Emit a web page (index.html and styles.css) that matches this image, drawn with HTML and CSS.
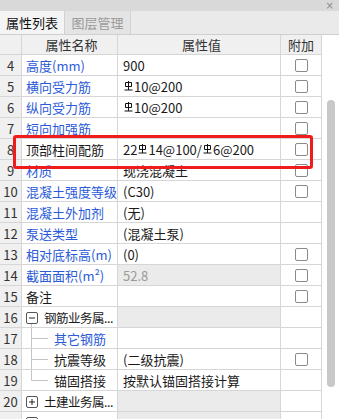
FILE: index.html
```html
<!DOCTYPE html>
<html lang="zh">
<head>
<meta charset="utf-8">
<link rel="stylesheet" href="styles.css">
</head>
<body>
<div class="panel">
  <div class="titlebar"><span class="close">×</span></div>
  <div class="tabs">
    <div class="tab active">属性列表</div>
    <div class="tab">图层管理</div>
  </div>
  <div class="body">
    <div class="grid">
      <div class="row head">
        <div class="c num"></div>
        <div class="c name">属性名称</div>
        <div class="c val">属性值</div>
        <div class="c add">附加</div>
      </div>
      <div class="row"><div class="c num">4</div><div class="c name blue">高度(mm)</div><div class="c val">900</div><div class="c add"><span class="cb"></span></div></div>
      <div class="row"><div class="c num">5</div><div class="c name blue">横向受力筋</div><div class="c val"><svg class="rb" viewBox="0 0 9 10"><path d="M4.5 0V9M1.5 1.5H7.5V5.5H1.5ZM0.5 9H8.5" /></svg>10@200</div><div class="c add"><span class="cb"></span></div></div>
      <div class="row"><div class="c num">6</div><div class="c name blue">纵向受力筋</div><div class="c val"><svg class="rb" viewBox="0 0 9 10"><path d="M4.5 0V9M1.5 1.5H7.5V5.5H1.5ZM0.5 9H8.5" /></svg>10@200</div><div class="c add"><span class="cb"></span></div></div>
      <div class="row"><div class="c num">7</div><div class="c name blue">短向加强筋</div><div class="c val"></div><div class="c add"><span class="cb"></span></div></div>
      <div class="row"><div class="c num">8</div><div class="c name">顶部柱间配筋</div><div class="c val">22<svg class="rb" viewBox="0 0 9 10"><path d="M4.5 0V9M1.5 1.5H7.5V5.5H1.5ZM0.5 9H8.5" /></svg>14@100/<svg class="rb" viewBox="0 0 9 10"><path d="M4.5 0V9M1.5 1.5H7.5V5.5H1.5ZM0.5 9H8.5" /></svg>6@200</div><div class="c add"><span class="cb"></span></div></div>
      <div class="row"><div class="c num">9</div><div class="c name blue">材质</div><div class="c val">现浇混凝土</div><div class="c add"><span class="cb"></span></div></div>
      <div class="row"><div class="c num">10</div><div class="c name blue">混凝土强度等级</div><div class="c val">(C30)</div><div class="c add"><span class="cb"></span></div></div>
      <div class="row"><div class="c num">11</div><div class="c name blue">混凝土外加剂</div><div class="c val">(无)</div><div class="c add"></div></div>
      <div class="row"><div class="c num">12</div><div class="c name blue">泵送类型</div><div class="c val">(混凝土泵)</div><div class="c add"></div></div>
      <div class="row"><div class="c num">13</div><div class="c name blue">相对底标高(m)</div><div class="c val">(0)</div><div class="c add"><span class="cb"></span></div></div>
      <div class="row"><div class="c num">14</div><div class="c name blue">截面面积(m²)</div><div class="c val ro">52.8</div><div class="c add"><span class="cb"></span></div></div>
      <div class="row"><div class="c num">15</div><div class="c name">备注</div><div class="c val"></div><div class="c add"><span class="cb"></span></div></div>
      <div class="row"><div class="c num">16</div><div class="c name tree"><svg class="tg" viewBox="0 0 12 21"><rect x="0.5" y="5.5" width="11" height="11" rx="1.5" class="box"/><path d="M3 11H9" class="sign"/><path d="M5.5 17V21" class="ln"/></svg><span class="grp">钢筋业务属...</span></div><div class="c val ro"></div><div class="c add"></div></div>
      <div class="row"><div class="c num">17</div><div class="c name tree"><svg class="tl" viewBox="0 0 28 21"><path d="M5.5 0V21M5.5 10.5H22" class="ln"/></svg><span class="blue">其它钢筋</span></div><div class="c val"></div><div class="c add"></div></div>
      <div class="row"><div class="c num">18</div><div class="c name tree"><svg class="tl" viewBox="0 0 28 21"><path d="M5.5 0V21M5.5 10.5H22" class="ln"/></svg><span>抗震等级</span></div><div class="c val">(二级抗震)</div><div class="c add"><span class="cb"></span></div></div>
      <div class="row"><div class="c num">19</div><div class="c name tree"><svg class="tl" viewBox="0 0 28 21"><path d="M5.5 0V10.5H22" class="ln"/></svg><span>锚固搭接</span></div><div class="c val">按默认锚固搭接计算</div><div class="c add"></div></div>
      <div class="row"><div class="c num">20</div><div class="c name tree"><svg class="tg" viewBox="0 0 12 21"><rect x="0.5" y="5.5" width="11" height="11" rx="1.5" class="box"/><path d="M3 11H9M6 8V14" class="sign"/></svg><span class="grp">土建业务属...</span></div><div class="c val ro"></div><div class="c add"></div></div>
      <div class="row"><div class="c num"></div><div class="c name tree"><svg class="tg" viewBox="0 0 12 21"><rect x="0.5" y="5.5" width="11" height="11" rx="1.5" class="box"/><path d="M3 11H9M6 8V14" class="sign"/></svg></div><div class="c val ro"></div><div class="c add"></div></div>
    </div>
    <div class="scroll"><div class="thumb"></div></div>
  </div>
  <div class="highlight"></div>
</div>
</body>
</html>
```

FILE: styles.css
```css
html, body {
  margin: 0;
  padding: 0;
  overflow: hidden;
  background: #ffffff;
}
.panel {
  position: relative;
  width: 339px;
  height: 419px;
  overflow: hidden;
  font-family: "Noto Sans CJK SC", "Noto Sans", sans-serif;
  font-size: 13px;
  color: #1a1a1a;
}
.titlebar {
  height: 11px;
  background: #d9d9d9;
  display: flex;
  justify-content: flex-end;
  align-items: center;
}
.close {
  font-family: "DejaVu Sans", sans-serif;
  font-size: 10px;
  line-height: 11px;
  color: #8c8c8c;
  margin-right: 5px;
}
.tabs {
  height: 24px;
  box-sizing: border-box;
  background: #eaeaea;
  border-bottom: 1px solid #cfcfcf;
  display: flex;
}
.tab {
  width: 66px;
  box-sizing: border-box;
  display: flex;
  align-items: center;
  justify-content: center;
  color: #9a9a9a;
  border-right: 1px solid #d2d2d2;
  background: #e4e4e4;
}
.tab.active {
  width: 65px;
  background: #f4f4f4;
  color: #111;
}
.body {
  display: flex;
}
.grid {
  width: 322px;
}
.row {
  display: grid;
  grid-template-columns: 22px 96px 163px 41px;
  height: 21px;
}
.row.head {
  height: 20px;
  background: #f0f0f0;
}
.c {
  box-sizing: border-box;
  border-right: 1px solid #d6d6d6;
  border-bottom: 1px solid #d6d6d6;
  display: flex;
  align-items: center;
  white-space: nowrap;
  overflow: hidden;
}
.head .c {
  justify-content: center;
  color: #333;
}
.num {
  justify-content: center;
  background: #f0f0f0;
  color: #333;
}
.name {
  padding-left: 4px;
}
.val {
  padding-left: 5px;
}
.add {
  justify-content: center;
}
.blue {
  color: #2a5ad8;
}
.ro {
  background: #ebebeb;
  color: #9a9a9a;
}
.cb {
  width: 13px;
  height: 13px;
  box-sizing: border-box;
  border: 1px solid #8a8a8a;
  border-radius: 2px;
  background: #fff;
}
.rb {
  width: 9px;
  height: 10px;
  margin: 0 1px 0 1px;
  vertical-align: 4px;
  fill: none;
  stroke: #111;
  stroke-width: 1;
}
.tree {
  align-items: stretch;
}
.tree span {
  display: flex;
  align-items: center;
}
.grp {
  font-size: 12.5px;
  letter-spacing: -0.5px;
}
.tg {
  width: 12px;
  height: 21px;
  flex: none;
  margin-right: 6px;
}
.tl {
  width: 28px;
  height: 21px;
  flex: none;
}
.box {
  fill: #fff;
  stroke: #555;
  stroke-width: 1;
}
.sign {
  stroke: #222;
  stroke-width: 1;
  fill: none;
}
.ln {
  stroke: #c4c4c4;
  stroke-width: 1;
  fill: none;
}
.scroll {
  width: 17px;
  height: 384px;
  box-sizing: border-box;
  padding-top: 65px;
  padding-left: 5px;
  background: #fff;
}
.thumb {
  width: 8px;
  height: 287px;
  border-radius: 4px;
  background: #c8c8c8;
}
.highlight {
  position: absolute;
  left: 13px;
  top: 135px;
  width: 300px;
  height: 34px;
  box-sizing: border-box;
  border: 3px solid #f01c1c;
  border-radius: 3px;
}
```
